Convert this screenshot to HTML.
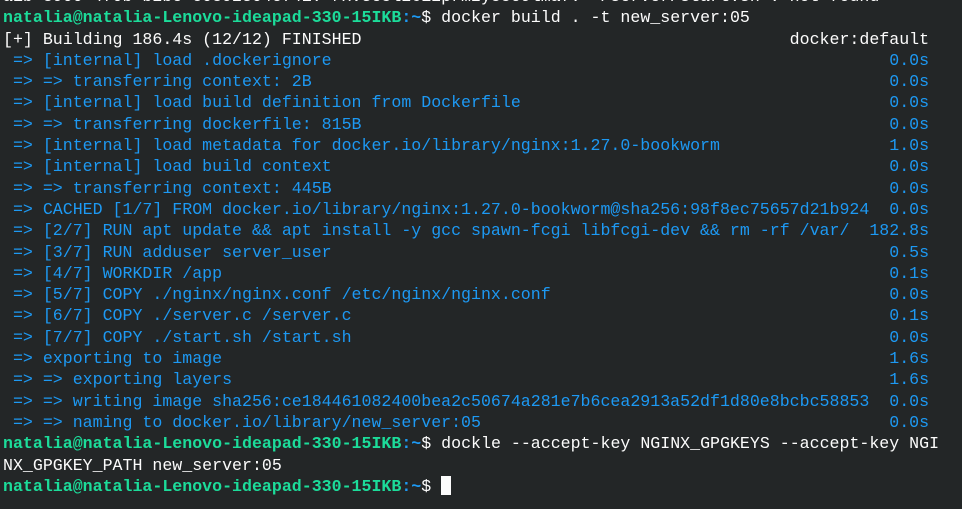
<!DOCTYPE html>
<html><head><meta charset="utf-8"><style>
html,body{margin:0;padding:0;background:#232627;width:962px;height:509px;overflow:hidden}
pre{position:absolute;left:3px;top:-14px;margin:0;font-family:"Liberation Mono","DejaVu Sans Mono",monospace;font-size:16.6px;line-height:21.3px;color:#fcfcfc;white-space:pre}
.g{color:#1cdc9a;font-weight:bold}.b{color:#1d99f3;font-weight:bold}.c{color:#1d99f3}
.cur{display:inline-block;width:10px;height:19px;background:#fcfcfc;vertical-align:-4px}
</style></head><body><pre>a1b-8900-470b-b2be-c0892304e741: rxv3e5l2612prmzy55o9lma7: ~/server/start.sh : not found
<span class="g">natalia@natalia-Lenovo-ideapad-330-15IKB</span><span class="b">:~</span>$ docker build . -t new_server:05
[+] Building 186.4s (12/12) FINISHED                                           docker:default
<span class="c"> => [internal] load .dockerignore                                                        0.0s
 => => transferring context: 2B                                                          0.0s
 => [internal] load build definition from Dockerfile                                     0.0s
 => => transferring dockerfile: 815B                                                     0.0s
 => [internal] load metadata for docker.io/library/nginx:1.27.0-bookworm                 1.0s
 => [internal] load build context                                                        0.0s
 => => transferring context: 445B                                                        0.0s
 => CACHED [1/7] FROM docker.io/library/nginx:1.27.0-bookworm@sha256:98f8ec75657d21b924  0.0s
 => [2/7] RUN apt update &amp;&amp; apt install -y gcc spawn-fcgi libfcgi-dev &amp;&amp; rm -rf /var/  182.8s
 => [3/7] RUN adduser server_user                                                        0.5s
 => [4/7] WORKDIR /app                                                                   0.1s
 => [5/7] COPY ./nginx/nginx.conf /etc/nginx/nginx.conf                                  0.0s
 => [6/7] COPY ./server.c /server.c                                                      0.1s
 => [7/7] COPY ./start.sh /start.sh                                                      0.0s
 => exporting to image                                                                   1.6s
 => => exporting layers                                                                  1.6s
 => => writing image sha256:ce184461082400bea2c50674a281e7b6cea2913a52df1d80e8bcbc58853  0.0s
 => => naming to docker.io/library/new_server:05                                         0.0s</span>
<span class="g">natalia@natalia-Lenovo-ideapad-330-15IKB</span><span class="b">:~</span>$ dockle --accept-key NGINX_GPGKEYS --accept-key NGI
NX_GPGKEY_PATH new_server:05
<span class="g">natalia@natalia-Lenovo-ideapad-330-15IKB</span><span class="b">:~</span>$ <span class="cur"></span></pre></body></html>
